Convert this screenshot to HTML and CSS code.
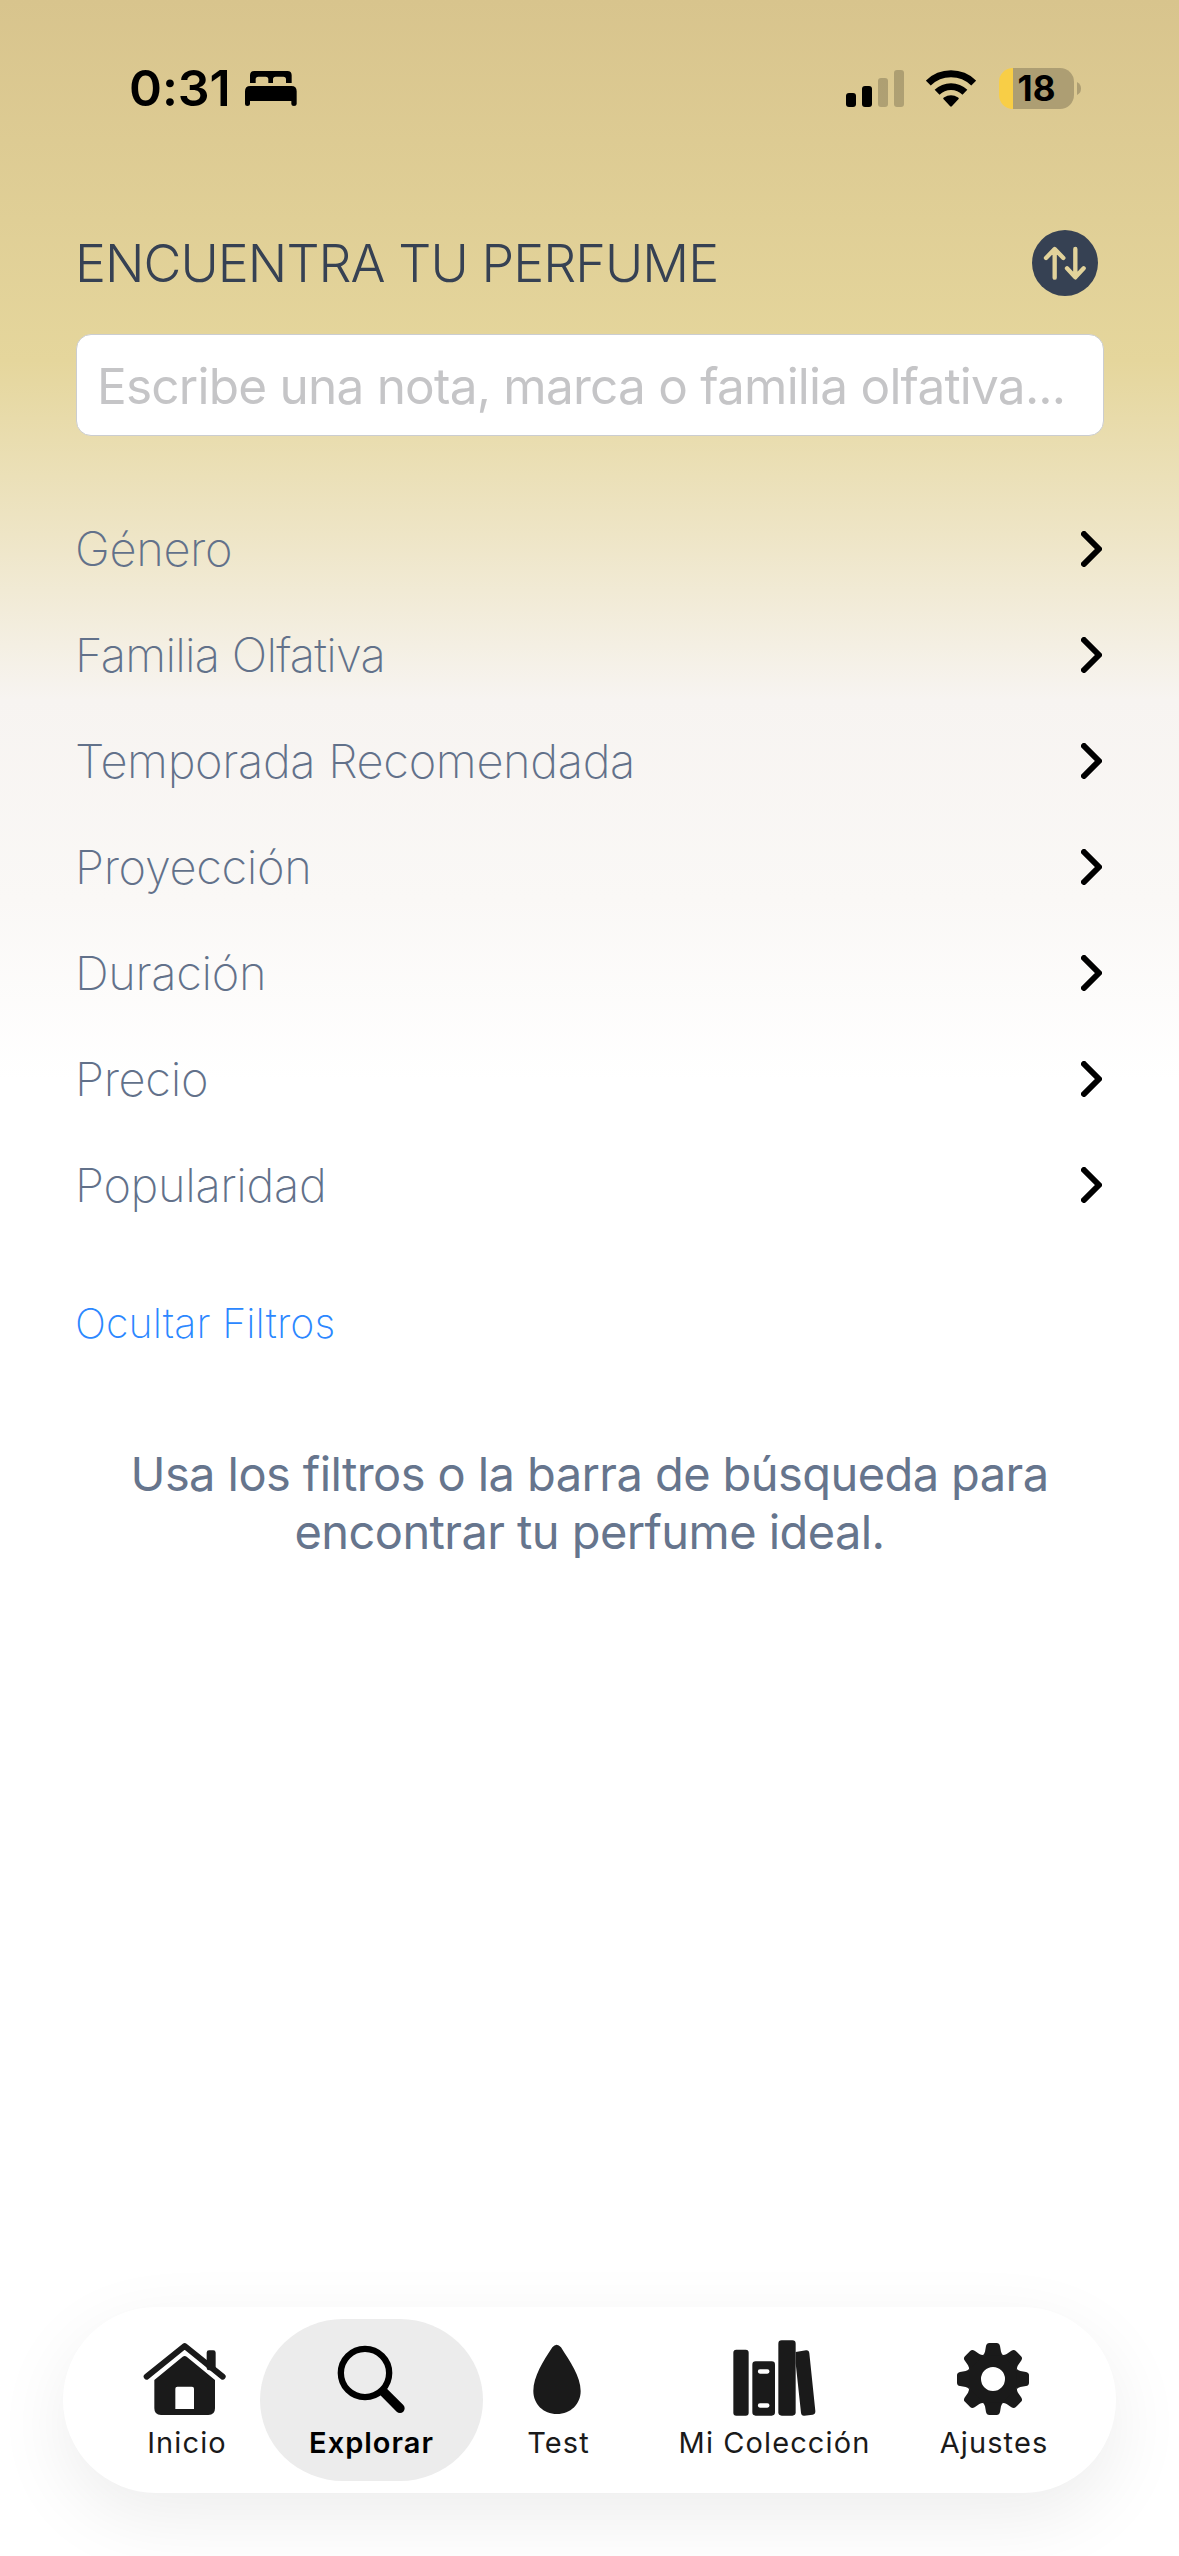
FILE: index.html
```html
<!DOCTYPE html>
<html lang="es">
<head>
<meta charset="utf-8">
<title>Encuentra tu perfume</title>
<link rel="stylesheet" href="styles.css">
</head>
<body>
<div class="screen">
  <div class="status">
    <span class="time">0:31</span>
    <svg class="bed" viewBox="435 93 156 105"><path d="M450 129V106Q450 93 463 93H562Q575 93 575 106V129H558V118Q558 110 550 110H527Q519 110 519 118V129H505V118Q505 110 497 110H475Q467 110 467 118V129Z"/><path d="M435 192V154Q435 138 451 138H574Q590 138 590 154V192Q590 198 582 198Q574 198 574 192V183H450V192Q450 198 442 198Q435 198 435 192Z"/></svg>
    <svg class="signal" viewBox="0 0 58 37"><rect y="23" width="10" height="14" rx="3"/><rect x="16" y="16" width="10" height="21" rx="3"/><g opacity=".2"><rect x="32" y="8" width="10" height="29" rx="3"/><rect x="48" width="10" height="37" rx="3"/></g></svg>
    <svg class="wifi" viewBox="319 87 151 111"><g fill="none" stroke="#000" stroke-width="21"><path d="M326 126A98 98 0 0 1 463 126"/><path d="M352.500 154A60 60 0 0 1 436.500 154"/></g><path d="M373 176Q369 172 373 169.500Q394.500 156 416 169.500Q420 172 416 176L397 196Q394.500 199 392 196Z"/></svg>
    <div class="battery"><span class="level">18</span></div>
    <svg class="nub" viewBox="0 0 4 13"><path d="M0 0Q4 2 4 6.500T0 13Z"/></svg>
  </div>

  <header class="header">
    <h1 class="title">ENCUENTRA TU PERFUME</h1>
    <svg class="sort" viewBox="996 60 198 198"><circle cx="1095" cy="159" r="99"/><path d="M1064 203V118M1038 144L1064 117L1090 144M1126 117V200M1101 175L1126 202L1151 175"/></svg>
  </header>

  <div class="search"><span>Escribe una nota, marca o familia olfativa...</span></div>

  <ul class="filters">
    <li><span>Género</span><svg viewBox="0 0 21 36"><path d="M3 3L18 18L3 33"/></svg></li>
    <li><span class="tight">Familia Olfativa</span><svg viewBox="0 0 21 36"><path d="M3 3L18 18L3 33"/></svg></li>
    <li><span>Temporada Recomendada</span><svg viewBox="0 0 21 36"><path d="M3 3L18 18L3 33"/></svg></li>
    <li><span>Proyección</span><svg viewBox="0 0 21 36"><path d="M3 3L18 18L3 33"/></svg></li>
    <li><span>Duración</span><svg viewBox="0 0 21 36"><path d="M3 3L18 18L3 33"/></svg></li>
    <li><span>Precio</span><svg viewBox="0 0 21 36"><path d="M3 3L18 18L3 33"/></svg></li>
    <li><span>Popularidad</span><svg viewBox="0 0 21 36"><path d="M3 3L18 18L3 33"/></svg></li>
  </ul>

  <div class="toggle">Ocultar Filtros</div>
  <p class="hint">Usa los filtros o la barra de búsqueda para<br>encontrar tu perfume ideal.</p>

  <nav class="tabs">
    <div class="tab">
      <svg viewBox="306 177 270 240"><path class="roof" d="M320 290L434 198L548 290"/><rect x="500" y="211" width="27" height="60" rx="7"/><path fill-rule="evenodd" d="M428 230Q434 226 440 230L525 300V385Q525 405 505 405H363Q343 405 343 385V300ZM406 387H462V326Q462 320 456 320H412Q406 320 406 326Z"/></svg>
      <span>Inicio</span>
    </div>
    <div class="tab active">
      <svg viewBox="860 177 270 240"><circle class="lens" cx="974" cy="279" r="72.500"/><path class="handle" d="M1030 336L1079 385"/></svg>
      <span>Explorar</span>
    </div>
    <div class="tab">
      <svg viewBox="102 177 270 240"><path d="M217 202Q230 186 243 202C270 245 302 290 302 333C302 372 272 402 231 402C190 402 160 372 160 333C160 290 190 243 217 202Z"/></svg>
      <span>Test</span>
    </div>
    <div class="tab">
      <svg viewBox="751 177 270 240"><rect x="761" y="209" width="46" height="198" rx="9"/><path fill-rule="evenodd" d="M828 244H876Q886 244 886 254V397Q886 407 876 407H828Q818 407 818 397V254Q818 244 828 244ZM841 268A6.500 6.500 0 0 0 841 281H863A6.500 6.500 0 0 0 863 268ZM841 370A6.500 6.500 0 0 0 841 383H863A6.500 6.500 0 0 0 863 370Z"/><rect x="896" y="181" width="52" height="226" rx="10"/><path d="M948 216L979 211Q988 210 989 220L1007 393Q1008 402 999 404L974 407Q965 408 964 398L948 250Z"/></svg>
      <span>Mi Colección</span>
    </div>
    <div class="tab">
      <svg viewBox="-132 -120 270 240"><defs><path id="tooth" d="M-32 -70Q-26 -74 -24 -82L-21 -99Q-19 -108 -11 -108H11Q19 -108 21 -99L24 -82Q26 -74 32 -70Z"/></defs><circle class="wheel" r="56"/><use href="#tooth"/><use href="#tooth" transform="rotate(45)"/><use href="#tooth" transform="rotate(90)"/><use href="#tooth" transform="rotate(135)"/><use href="#tooth" transform="rotate(180)"/><use href="#tooth" transform="rotate(225)"/><use href="#tooth" transform="rotate(270)"/><use href="#tooth" transform="rotate(315)"/></svg>
      <span>Ajustes</span>
    </div>
  </nav>
</div>
</body>
</html>
```
FILE: styles.css
```css
* { box-sizing: border-box; margin: 0; padding: 0; }

body { font-family: Inter, "Liberation Sans", sans-serif; background: #fff; }

.screen {
  display: flex;
  flex-direction: column;
  width: 1179px;
  height: 2556px;
  overflow: hidden;
  background: linear-gradient(180deg, #d8c48d 0, #e5d69c 360px, #eee5c6 535px, #f7f4f1 700px, #faf8f6 900px, #fff 1080px);
}

.status { display: flex; align-items: center; height: 176px; padding: 0 98px 0 129px; }
.time { font-size: 50px; font-weight: 600; line-height: 60px; width: 100px; letter-spacing: -.1px; white-space: nowrap; }
.bed { width: 52px; height: 35px; margin-left: 16px; }
.signal { width: 58px; height: 37px; margin-left: auto; }
.wifi { width: 50px; height: 37px; margin-left: 22px; }
.battery {
  display: flex; align-items: center; justify-content: center;
  width: 75px; height: 41px; margin-left: 23px;
  border-radius: 14px;
  background: linear-gradient(90deg, #f8ce46 14px, #ad9e73 14px);
}
.level { font-size: 35px; font-weight: 700; line-height: 41px; }
.nub { width: 4px; height: 13px; margin-left: 3px; fill: #ad9e73; }

.header { display: flex; align-items: center; justify-content: space-between; height: 66px; margin: 54px 81px 0 75px; }
.title { font-size: 52px; font-weight: 300; letter-spacing: -.93px; color: #364153; white-space: nowrap; }
.sort { width: 66px; height: 66px; fill: #364153; }
.sort path { fill: none; stroke: #e2d39b; stroke-width: 13; stroke-linecap: round; stroke-linejoin: round; }

.search {
  display: flex; align-items: center;
  height: 102px; margin: 38px 75px 0 76px; padding: 2px 18px 0 20px;
  border: 1px solid #cbcdd0; border-radius: 15px;
  background: #fff; color: #c5c5c7; font-size: 49.5px; letter-spacing: -.77px; white-space: nowrap;
}

.filters { margin: 60px 77px 0 75px; list-style: none; }
.filters li { display: flex; align-items: center; justify-content: space-between; height: 106px; font-size: 47px; font-weight: 200; letter-spacing: -.35px; color: #62718a; }
.filters span { padding-bottom: 2px; }
.filters .tight { letter-spacing: -.75px; }
.filters svg { width: 21px; height: 36px; fill: none; stroke: #000; stroke-width: 6; stroke-linecap: round; stroke-linejoin: round; }

.toggle { margin: 55px 75px 0; font-size: 41px; font-weight: 200; line-height: 60px; letter-spacing: .1px; color: #2b87ff; }

.hint { margin: 92px 75px 0; font-size: 47px; line-height: 58px; letter-spacing: -.58px; text-align: center; color: #66758d; }

.tabs {
  display: grid; grid-template-columns: 146px 223px 151px 281px 158px;
  height: 186px; margin: auto 63px 63px; padding: 12px 0 12px 51px;
  border-radius: 93px;
  background: #fff;
  box-shadow: 0 24px 75px rgba(0, 0, 0, .075);
}
.tab { display: flex; flex-direction: column; align-items: center; padding-top: 20px; font-size: 29px; font-weight: 400; letter-spacing: 1.1px; color: #1a1a1a; white-space: nowrap; }
.tab svg { width: 90px; height: 80px; fill: #1a1a1a; }
.tab span { line-height: 36px; margin-top: 6px; }
.tab.active { border-radius: 83px / 81px; background: #ececec; color: #000; font-weight: 600; letter-spacing: 1px; }
.roof { fill: none; stroke: #1a1a1a; stroke-width: 18; stroke-linecap: round; stroke-linejoin: round; }
.lens { fill: none; stroke: #000; stroke-width: 19; }
.handle { stroke: #000; stroke-width: 28; stroke-linecap: round; }
.wheel { fill: none; stroke: #1a1a1a; stroke-width: 40; }
```
